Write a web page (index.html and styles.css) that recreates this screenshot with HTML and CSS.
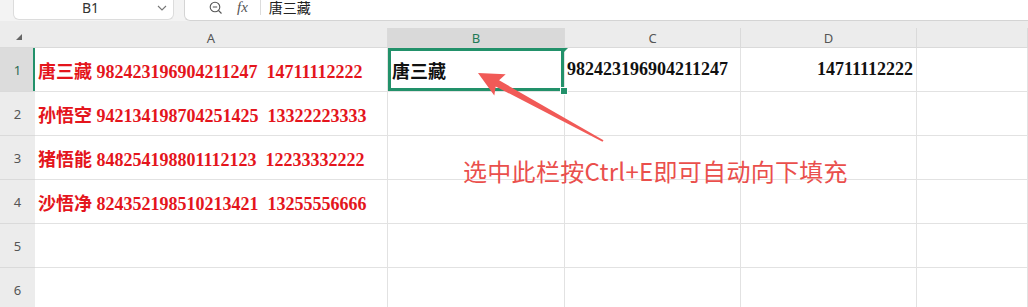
FILE: index.html
```html
<!DOCTYPE html>
<html lang="zh-CN">

<head>
    <meta charset="UTF-8">
    <title>Ctrl+E 快速填充</title>
    <link rel="stylesheet" href="styles.css">
</head>

<body>

    <div class="topbar">
        <div class="namebox">
            <span class="cell-ref">B1</span>
            <svg class="chevron" width="10" height="6" viewBox="0 0 10 6">
                <path d="M1 1 L5 5 L9 1" fill="none" stroke="#777" stroke-width="1.1"/>
            </svg>
        </div>
        <div class="fxbar">
            <svg class="zoom-icon" width="14" height="14" viewBox="0 0 14 14">
                <circle cx="6" cy="6" r="4.8" fill="none" stroke="#555" stroke-width="1.1"/>
                <path d="M3.8 6 H8.2 M9.5 9.5 L12.5 12.5" stroke="#555" stroke-width="1.1"/>
            </svg>
            <span class="fx">fx</span>
            <span class="fx-divider"></span>
            <span class="fx-value">唐三藏</span>
        </div>
    </div>

    <div class="strip"></div>

    <div class="sheet">
        <!-- column headers -->
        <div class="corner"><span class="corner-mark"></span></div>
        <div class="col-head">A</div>
        <div class="col-head active">B</div>
        <div class="col-head">C</div>
        <div class="col-head">D</div>
        <div class="col-head"></div>

        <!-- row 1 -->
        <div class="row-head active">1</div>
        <div class="cell red">唐三藏 982423196904211247&nbsp; 14711112222</div>
        <div class="cell black selected">唐三藏<span class="handle"></span><span class="corner-tick"></span></div>
        <div class="cell black">982423196904211247</div>
        <div class="cell black right">14711112222</div>
        <div class="cell"></div>

        <!-- row 2 -->
        <div class="row-head">2</div>
        <div class="cell red">孙悟空 942134198704251425&nbsp; 13322223333</div>
        <div class="cell"></div>
        <div class="cell"></div>
        <div class="cell"></div>
        <div class="cell"></div>

        <!-- row 3 -->
        <div class="row-head">3</div>
        <div class="cell red">猪悟能 848254198801112123&nbsp; 12233332222</div>
        <div class="cell"></div>
        <div class="cell"></div>
        <div class="cell"></div>
        <div class="cell"></div>

        <!-- row 4 -->
        <div class="row-head">4</div>
        <div class="cell red">沙悟净 824352198510213421&nbsp; 13255556666</div>
        <div class="cell"></div>
        <div class="cell"></div>
        <div class="cell"></div>
        <div class="cell"></div>

        <!-- row 5 -->
        <div class="row-head">5</div>
        <div class="cell"></div>
        <div class="cell"></div>
        <div class="cell"></div>
        <div class="cell"></div>
        <div class="cell"></div>

        <!-- row 6 -->
        <div class="row-head">6</div>
        <div class="cell"></div>
        <div class="cell"></div>
        <div class="cell"></div>
        <div class="cell"></div>
        <div class="cell"></div>
    </div>

    <!-- annotation over the sheet -->
    <svg class="arrow" width="1028" height="307" viewBox="0 0 1028 307">
        <polygon points="478,73 505.7,74.2 499.1,80.3 603.5,140.2 602.5,141.8 495.7,86.5 494.3,95.4" fill="#f15a57"/>
    </svg>
    <div class="note">选中此栏按Ctrl+E即可自动向下填充</div>

</body>

</html>
```

FILE: styles.css
```css
/* Basic styling */
body {
    margin: 0;
    width: 1028px;
    height: 307px;
    overflow: hidden;
    position: relative;
    background-color: white;
    font-family: "Noto Sans", "Liberation Sans", "Noto Sans CJK SC", sans-serif;
}

/* Top bar: name box + formula bar */
.topbar {
    display: flex;
    height: 21px;
    background-color: #f3f3f3;
}

.namebox {
    width: 161px;
    margin-left: 13px;
    height: 20px;
    box-sizing: border-box;
    border: 1px solid #dcdcdc;
    border-top: none;
    border-radius: 0 0 6px 6px;
    background-color: white;
    display: flex;
    align-items: center;
    position: relative;
}

.cell-ref {
    flex: 1;
    text-align: center;
    font-size: 14px;
    color: #333;
    padding-left: 10px;
    margin-top: -4px;
}

.chevron {
    margin-right: 6px;
    margin-top: -4px;
}

.fxbar {
    flex: 1;
    margin-left: 10px;
    height: 21px;
    box-sizing: border-box;
    border: 1px solid #d4d4d4;
    border-top: none;
    border-right: none;
    border-radius: 0 0 0 6px;
    background-color: white;
    display: flex;
    align-items: center;
}

.zoom-icon {
    margin-left: 24px;
    margin-top: -5px;
}

.fx {
    margin-left: 14px;
    font-family: "Liberation Serif", serif;
    font-style: italic;
    font-size: 15px;
    color: #555;
    margin-top: -6px;
}

.fx-divider {
    width: 1px;
    height: 15px;
    background-color: #dcdcdc;
    margin-left: 12px;
    margin-top: -5px;
}

.fx-value {
    margin-left: 8px;
    font-size: 14px;
    color: #222;
    margin-top: -6px;
}

.strip {
    height: 7px;
    background-color: #ececec;
}

/* Sheet grid */
.sheet {
    display: grid;
    grid-template-columns: 35px 353px 177px 176px 176px 111px;
    grid-template-rows: 20px repeat(6, 44px);
}

.corner {
    background-color: #ececec;
    border-bottom: 1px solid #dadada;
    position: relative;
}

.corner-mark {
    position: absolute;
    left: 16px;
    top: 6px;
    width: 0;
    height: 0;
    border-left: 6px solid transparent;
    border-bottom: 6px solid #666;
}

.col-head {
    background-color: #ececec;
    border-right: 1px solid #dadada;
    border-bottom: 1px solid #dadada;
    font-size: 13px;
    color: #555;
    display: flex;
    align-items: center;
    justify-content: center;
}

.col-head.active {
    background-color: #d9d9d9;
    color: #1f7a56;
}

.row-head {
    background-color: #ececec;
    border-bottom: 1px solid #dadada;
    font-size: 13px;
    color: #555;
    display: flex;
    align-items: center;
    justify-content: center;
}

.row-head.active {
    background-color: #dcdcdc;
    color: #2d6b52;
    box-shadow: inset -2px 0 0 #22916a;
}

.cell {
    border-right: 1px solid #e2e2e2;
    border-bottom: 1px solid #e2e2e2;
    padding: 0 3px;
    display: flex;
    align-items: center;
    white-space: nowrap;
    font-family: "Liberation Serif", "Noto Sans CJK SC", serif;
    font-weight: bold;
    font-size: 18px;
}

.cell.red {
    color: #e4151c;
}

.cell.black {
    color: #111;
    padding-left: 2px;
}

.cell.right {
    justify-content: flex-end;
}

.cell.selected {
    position: relative;
    box-shadow: inset 0 0 0 3px #22916a;
    padding-left: 4px;
}

.handle {
    position: absolute;
    right: -4px;
    bottom: -4px;
    width: 6px;
    height: 6px;
    background-color: #22916a;
    border: 1px solid white;
    z-index: 2;
}

.corner-tick {
    position: absolute;
    right: -4px;
    top: 0;
    width: 0;
    height: 0;
    border-left: 4px solid #22916a;
    border-bottom: 4px solid transparent;
}

/* Annotation */
.arrow {
    position: absolute;
    left: 0;
    top: 0;
}

.note {
    position: absolute;
    left: 463px;
    top: 157px;
    font-family: "Noto Sans CJK SC", sans-serif;
    font-size: 24px;
    line-height: 28px;
    color: #ea4f4c;
    letter-spacing: 0.3px;
}
```
